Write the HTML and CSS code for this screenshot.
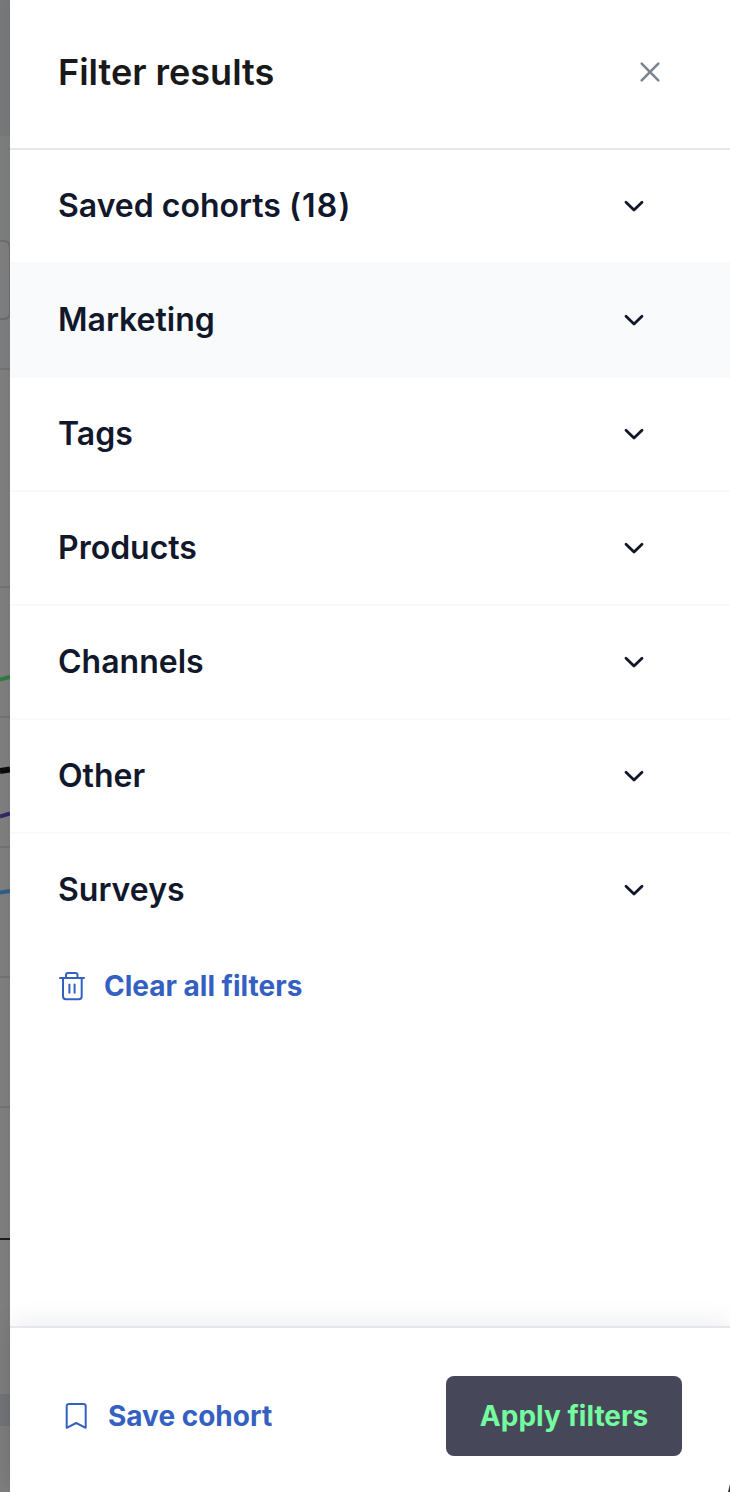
FILE: index.html
```html
<!DOCTYPE html>
<html lang="en">
<head>
  <meta charset="UTF-8">
  <title>Filter results</title>
  <meta name="viewport" content="width=device-width, initial-scale=1.0">
  <link rel="stylesheet" href="styles.css">
</head>
<body>
  <div class="layout">
    <!-- Dimmed dashboard behind the drawer -->
    <div class="backdrop">
      <svg width="10" height="1492" viewBox="0 0 10 1492" fill="none">
        <rect width="10" height="136" fill="#78797b"/>
        <rect y="136" width="10" height="233" fill="#7c7f7d"/>
        <path d="M-4 241H4a6 6 0 0 1 6 6V313a6 6 0 0 1-6 6H-4" fill="#807f80" stroke="#6d6c72" stroke-width="2"/>
        <path d="M0 369H10M0 587H10M0 717H10M0 847H10M0 977H10M0 1107H10" stroke="#737374" stroke-width="2"/>
        <path d="M0 679.5L10 677" stroke="#337a42" stroke-width="4"/>
        <path d="M0 771L10 769.5" stroke="#0c0c0c" stroke-width="6"/>
        <path d="M0 816.5L10 813.5" stroke="#302b69" stroke-width="4"/>
        <path d="M0 892.5L10 891" stroke="#2d608c" stroke-width="4"/>
        <path d="M0 1239H10" stroke="#1c1c1d" stroke-width="2"/>
        <rect y="1394" width="10" height="32" fill="#737579"/>
      </svg>
    </div>

    <aside class="drawer">
      <header class="drawer-header">
        <h1>Filter results</h1>
        <button class="close-btn" aria-label="Close">
          <svg width="24" height="24" viewBox="0 0 24 24"><path d="M3.7 3.7L20.3 20.3M20.3 3.7L3.7 20.3"/></svg>
        </button>
      </header>

      <div class="filters">
        <button class="filter-row"><span>Saved cohorts <span class="count">(18)</span></span>
          <svg class="chevron" width="24" height="24" viewBox="0 0 24 24"><path d="M4 8.200L12 16L20 8.200"/></svg>
        </button>
        <button class="filter-row active"><span>Marketing</span>
          <svg class="chevron" width="24" height="24" viewBox="0 0 24 24"><path d="M4 8.200L12 16L20 8.200"/></svg>
        </button>
        <button class="filter-row"><span>Tags</span>
          <svg class="chevron" width="24" height="24" viewBox="0 0 24 24"><path d="M4 8.200L12 16L20 8.200"/></svg>
        </button>
        <button class="filter-row"><span>Products</span>
          <svg class="chevron" width="24" height="24" viewBox="0 0 24 24"><path d="M4 8.200L12 16L20 8.200"/></svg>
        </button>
        <button class="filter-row"><span>Channels</span>
          <svg class="chevron" width="24" height="24" viewBox="0 0 24 24"><path d="M4 8.200L12 16L20 8.200"/></svg>
        </button>
        <button class="filter-row"><span>Other</span>
          <svg class="chevron" width="24" height="24" viewBox="0 0 24 24"><path d="M4 8.200L12 16L20 8.200"/></svg>
        </button>
        <button class="filter-row"><span>Surveys</span>
          <svg class="chevron" width="24" height="24" viewBox="0 0 24 24"><path d="M4 8.200L12 16L20 8.200"/></svg>
        </button>
        <button class="link-btn clear-btn">
          <svg width="28" height="32" viewBox="0 0 28 32">
            <path d="M2 8H26M8 8V5a2 2 0 0 1 2-2h7.500a2 2 0 0 1 2 2V8M5 8V26.300a3 3 0 0 0 3 3H20.700a3 3 0 0 0 3-3V8M11.400 14.500V22.800M16.600 14.500V22.800"/>
          </svg>
          Clear all filters
        </button>
      </div>

      <footer class="drawer-footer">
        <button class="link-btn save-btn">
          <svg width="24" height="32" viewBox="0 0 24 32">
            <path d="M2.700 27.800V6.200a2.300 2.300 0 0 1 2.300-2.300h14.400a2.300 2.300 0 0 1 2.300 2.300V27.800L12.200 23Z"/>
          </svg>
          Save cohort
        </button>
        <button class="apply-btn">Apply filters</button>
      </footer>
      <svg class="corner" width="2" height="8" viewBox="0 0 2 8"><path d="M2 0V8H0Z"/></svg>
    </aside>
  </div>
</body>
</html>
```
FILE: styles.css
```css
* { box-sizing: border-box; }
body {
  margin: 0;
  font-family: 'Inter', Arial, sans-serif;
  color: #12182b;
  background: #fff;
}
button {
  border: none;
  background: none;
  padding: 0;
  font-family: inherit;
  color: inherit;
  cursor: pointer;
}
svg { display: block; flex: none; }
.layout {
  display: flex;
  height: 1492px;
  overflow: hidden;
}
.backdrop {
  width: 10px;
  flex: none;
  background: #7f7f7f;
}
.drawer {
  position: relative;
  flex: 1;
  display: flex;
  flex-direction: column;
  background: #fff;
  box-shadow: 0 0 16px rgba(0,0,0,0.08);
}
.drawer-header {
  height: 150px;
  padding: 0 68px 4px 48px;
  display: flex;
  align-items: center;
  justify-content: space-between;
  border-bottom: 2px solid #e6e6eb;
}
h1 {
  margin: 0;
  font-size: 36px;
  font-weight: 600;
  color: #19191b;
}
.close-btn svg {
  stroke: #7b858f;
  stroke-width: 2.6;
  stroke-linecap: round;
}
.filters { flex: 1; }
.filter-row {
  width: 100%;
  height: 114px;
  padding: 0 84px 0 48px;
  display: flex;
  align-items: center;
  justify-content: space-between;
  border-bottom: 2px solid #f9fafb;
  font-size: 32px;
  font-weight: 600;
}
.filter-row > span { padding-bottom: 2px; }
.count { letter-spacing: 1.2px; }
.filter-row.active { background: #f9fafc; }
.filter-row:nth-child(7) { height: 112px; border-bottom: none; }
.chevron {
  fill: none;
  stroke: #12182b;
  stroke-width: 2.8;
  stroke-linecap: round;
  stroke-linejoin: round;
}
.link-btn {
  display: flex;
  align-items: center;
  font-size: 28px;
  font-weight: 700;
  color: #3461c1;
}
.link-btn svg {
  fill: none;
  stroke: #3461c1;
  stroke-width: 2;
  stroke-linejoin: round;
  stroke-linecap: round;
}
.clear-btn {
  height: 80px;
  padding-left: 48px;
  gap: 18px;
}
.drawer-footer {
  height: 166px;
  padding: 12px 48px 0 54px;
  display: flex;
  align-items: center;
  justify-content: space-between;
  border-top: 2px solid #e6e6eb;
  background: #fff;
  box-shadow: 0 -4px 24px rgba(16,24,20,0.08);
}
.save-btn { gap: 20px; }
.apply-btn {
  width: 236px;
  height: 80px;
  border-radius: 8px;
  background: #464859;
  color: #75fb9f;
  font-size: 28px;
  font-weight: 700;
}
/* rounded window edge */
.corner {
  position: absolute;
  right: 0;
  bottom: 0;
  fill: #33343f;
}
```
